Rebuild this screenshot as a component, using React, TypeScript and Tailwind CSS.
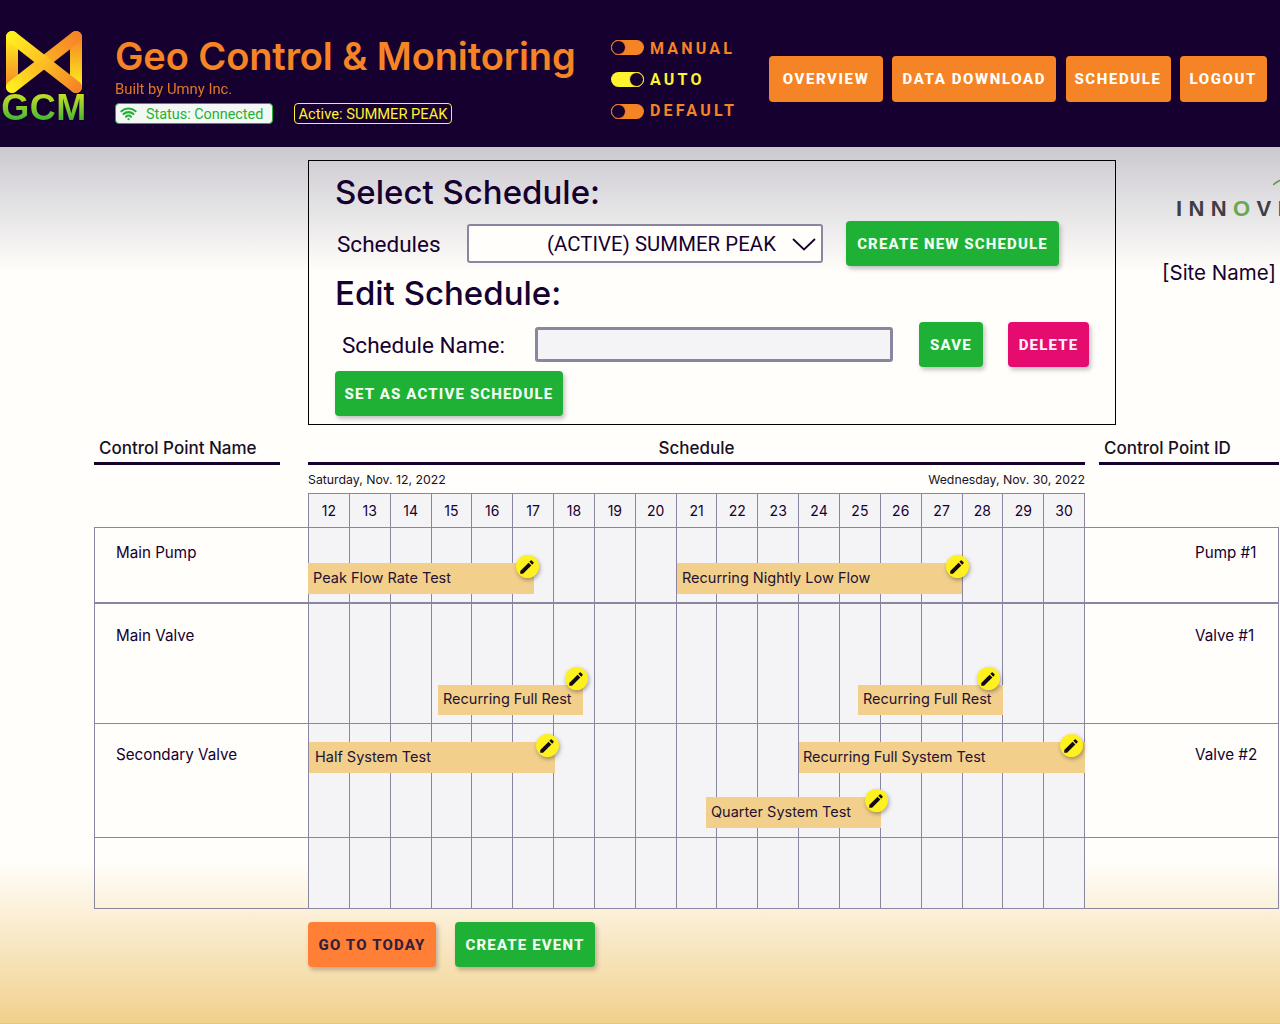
import React from "react";
import { Wifi } from "lucide-react";
import { MdEdit } from "react-icons/md";

const days = [12,13,14,15,16,17,18,19,20,21,22,23,24,25,26,27,28,29,30];

type Ev = { label: string; left: number; top: number; width: number; height: number; pencilX: number; pencilY: number; textX: number };

const rows: { name: string; id: string; height: number; pad: number; border: string; events: Ev[] }[] = [
  { name: "Main Pump", id: "Pump #1", height: 76, pad: 15, border: "border-b-2", events: [
    { label: "Peak Flow Rate Test", left: 0, top: 35, width: 226, height: 31, pencilX: 219, pencilY: 40, textX: 5 },
    { label: "Recurring Nightly Low Flow", left: 369, top: 35, width: 285, height: 31, pencilX: 649, pencilY: 40, textX: 5 },
  ]},
  { name: "Main Valve", id: "Valve #1", height: 120, pad: 22, border: "border-b", events: [
    { label: "Recurring Full Rest", left: 130, top: 81, width: 145, height: 30, pencilX: 268, pencilY: 76, textX: 5 },
    { label: "Recurring Full Rest", left: 550, top: 81, width: 145, height: 30, pencilX: 680, pencilY: 76, textX: 5 },
  ]},
  { name: "Secondary Valve", id: "Valve #2", height: 114, pad: 21, border: "border-b", events: [
    { label: "Half System Test", left: 1, top: 18, width: 246, height: 31, pencilX: 239, pencilY: 23, textX: 6 },
    { label: "Recurring Full System Test", left: 491, top: 18, width: 286, height: 31, pencilX: 763, pencilY: 23, textX: 4 },
    { label: "Quarter System Test", left: 398, top: 73, width: 175, height: 31, pencilX: 568, pencilY: 78, textX: 5 },
  ]},
  { name: "", id: "", height: 71, pad: 0, border: "border-b", events: [] },
];

function Toggle({ on, label, textCls }: { on?: boolean; label: string; textCls: string }) {
  const color = on ? "text-[#fff22e]" : "text-[#f58426]";
  return (
    <div className="flex items-center h-[15px] gap-[6px]">
      <div className={`w-[33px] h-[15px] rounded-full flex ${on ? "bg-[#fff22e] justify-end" : "bg-[#f58426] justify-start"}`}>
        <div className={`w-[15px] h-[15px] rounded-full bg-[#160030] border ${on ? "border-[#fff22e]" : "border-[#f58426]"}`} />
      </div>
      <span className={`font-['Roboto'] font-bold text-[16px] tracking-[3.2px] leading-none ${textCls} ${color}`}>{label}</span>
    </div>
  );
}

function NavBtn({ children, w }: { children: React.ReactNode; w: string }) {
  return (
    <button className={`${w} h-[46px] pt-[1px] bg-[#f58426] rounded-[4px] text-white font-['Roboto'] font-extrabold text-[15px] tracking-[1.6px] flex items-center justify-center`}>
      {children}
    </button>
  );
}

function Btn({ children, cls }: { children: React.ReactNode; cls: string }) {
  return (
    <button className={`${cls} h-[45px] pt-[1px] rounded-[4px] font-['Roboto'] font-extrabold text-[15px] tracking-[1.15px] flex items-center justify-center shadow-[2px_3px_4px_rgba(60,50,60,0.3)]`}>
      {children}
    </button>
  );
}

function Logo() {
  return (
    <div className="w-[86px] flex flex-col items-center shrink-0">
      <svg width="80" height="64" viewBox="0 0 80 64" className="block">
        <defs>
          <linearGradient id="a" gradientUnits="userSpaceOnUse" x1="6" y1="6" x2="74" y2="58">
            <stop offset="0" stopColor="#fff01f" /><stop offset="0.5" stopColor="#fbbf24" /><stop offset="1" stopColor="#f58426" />
          </linearGradient>
          <linearGradient id="b" gradientUnits="userSpaceOnUse" x1="6" y1="58" x2="74" y2="6">
            <stop offset="0" stopColor="#fff01f" /><stop offset="0.5" stopColor="#fbb024" /><stop offset="1" stopColor="#f58426" />
          </linearGradient>
          <linearGradient id="c" gradientUnits="userSpaceOnUse" x1="6" y1="6" x2="6" y2="58">
            <stop offset="0" stopColor="#fff01f" /><stop offset="1" stopColor="#f58426" />
          </linearGradient>
          <linearGradient id="d" gradientUnits="userSpaceOnUse" x1="74" y1="6" x2="74" y2="58">
            <stop offset="0" stopColor="#f58426" /><stop offset="1" stopColor="#fff01f" />
          </linearGradient>
        </defs>
        <path d="M8 7V57" stroke="url(#c)" strokeWidth="12" strokeLinecap="round" fill="none" />
        <path d="M72 7V57" stroke="url(#d)" strokeWidth="12" strokeLinecap="round" fill="none" />
        <path d="M8 57L72 7" stroke="url(#b)" strokeWidth="12" strokeLinecap="round" fill="none" />
        <path d="M8 7L72 57" stroke="url(#a)" strokeWidth="12" strokeLinecap="round" fill="none" />
      </svg>
      <div className="font-['Liberation_Sans'] font-bold text-[36px] leading-[30px] -mt-[1px] tracking-[0.5px] bg-gradient-to-b from-[#c6e21f] to-[#22b233] bg-clip-text text-transparent">GCM</div>
    </div>
  );
}

function Header() {
  return (
    <header className="h-[147px] bg-[#160030] flex items-start shrink-0">
      <div className="pl-[1px] pt-[30px] w-[115px] shrink-0"><Logo /></div>
      <div className="w-[496px] shrink-0 pt-[33px] flex flex-col">
        <div className="font-['Inter'] font-semibold text-[38px] leading-[46px] text-[#f58426] tracking-[-0.1px] whitespace-nowrap">Geo Control &amp; Monitoring</div>
        <div className="font-['Roboto'] text-[14.8px] leading-[18px] mt-[1px] text-[#f58426] opacity-90">Built by Umny Inc.</div>
        <div className="flex items-center mt-[5px]">
          <div className="w-[158px] h-[21px] rounded-[4px] bg-[#f4f8f4] border border-[#1fb136] flex items-center pl-[4px] text-[#1fb136]">
            <Wifi size={17} strokeWidth={3} />
            <span className="font-['Roboto'] text-[14.4px] leading-none ml-[9px] mt-[3px]">Status: Connected</span>
          </div>
          <div className="ml-[21px] w-[158px] h-[21px] pt-[1px] rounded-[4px] border border-[#fff22e] text-[#fff22e] flex items-center justify-center font-['Roboto'] text-[14.7px] leading-none whitespace-nowrap">Active: SUMMER PEAK</div>
        </div>
      </div>
      <div className="w-[158px] shrink-0 pt-[40px] flex flex-col gap-[17px]">
        <Toggle label="MANUAL" textCls="mt-[3px]" />
        <Toggle on label="AUTO" textCls="mt-[1px]" />
        <Toggle label="DEFAULT" textCls="-mt-[1px]" />
      </div>
      <div className="pt-[56px] flex gap-[9.25px]">
        <NavBtn w="w-[114px]">OVERVIEW</NavBtn>
        <NavBtn w="w-[164px]">DATA DOWNLOAD</NavBtn>
        <NavBtn w="w-[105px]">SCHEDULE</NavBtn>
        <NavBtn w="w-[87px]">LOGOUT</NavBtn>
      </div>
    </header>
  );
}

function SchedulePanel() {
  return (
    <section className="w-[808px] h-[265px] border border-black pl-[26px] shrink-0 flex flex-col text-[#160030]">
      <h2 className="font-['Inter'] font-medium text-[33px] leading-[40px] mt-[11px]">Select Schedule:</h2>
      <div className="flex items-center mt-[9px] h-[45px]">
        <span className="font-['Roboto'] text-[22.5px] mt-[2px] w-[132px] pl-[2px]">Schedules</span>
        <div className="w-[356px] h-[39px] pt-[1px] bg-[#fffefa] border-2 border-[#8a86a0] rounded-[3px] flex items-center justify-end pr-[5px]">
          <span className="font-['Roboto'] text-[20.3px] mr-[16px] tracking-[0.1px]">(ACTIVE) SUMMER PEAK</span>
          <svg width="24" height="14" viewBox="0 0 24 14" fill="none" stroke="#160030" strokeWidth="1.8"><path d="M1 2L12 12.5L23 2" /></svg>
        </div>
        <Btn cls="ml-[23px] w-[213px] bg-[#1fb136] text-[#f2fff2]">CREATE NEW SCHEDULE</Btn>
      </div>
      <h2 className="font-['Inter'] font-medium text-[33px] leading-[40px] mt-[7px]">Edit Schedule:</h2>
      <div className="flex items-center mt-[9px] h-[45px]">
        <span className="font-['Roboto'] text-[22.5px] mt-[2px] w-[200px] pl-[7px]">Schedule Name:</span>
        <div className="w-[358px] h-[35px] bg-[#f4f4f7] border-[3px] border-[#8a86a0] rounded-[3px]" />
        <Btn cls="ml-[26px] w-[64px] bg-[#1fb136] text-[#f2fff2]">SAVE</Btn>
        <Btn cls="ml-[25px] w-[81px] bg-[#e60b6f] text-[#fff2f8]">DELETE</Btn>
      </div>
      <Btn cls="mt-[4px] w-[228px] bg-[#1fb136] text-[#f2fff2]">SET AS ACTIVE SCHEDULE</Btn>
    </section>
  );
}

function Brand() {
  return (
    <div className="ml-[46px] w-[118px] overflow-hidden shrink-0">
      <div className="relative h-[61px] pl-[14px] pt-[36px]">
        <svg width="8" height="7" viewBox="0 0 8 7" className="absolute left-[111px] top-[19px]"><path d="M0 6C2 4 4 2.5 8 1" stroke="#5a9a3c" strokeWidth="1.5" fill="none" /></svg>
        <div className="font-['Liberation_Sans'] font-bold text-[22px] leading-[26px] tracking-[6.4px] text-[#3f3d45] whitespace-nowrap">INN<span className="text-[#6aa84f]">O</span>VI</div>
      </div>
      <div className="font-['Inter'] text-[20.5px] leading-[28px] text-[#160030] mt-[38px] whitespace-nowrap">[Site Name]</div>
    </div>
  );
}

function EventBar({ e }: { e: Ev }) {
  return (
    <>
      <div
        className="absolute bg-[#f2d08c] flex items-center pb-[2px] font-['Inter'] text-[14.5px] text-[#241233] whitespace-nowrap"
        style={{ left: e.left, top: e.top, width: e.width, height: e.height, paddingLeft: e.textX }}
      >
        {e.label}
      </div>
      <div
        className="absolute w-[23px] h-[23px] rounded-full bg-[#fff01f] flex items-center justify-center shadow-[1px_2px_4px_rgba(40,30,40,0.4)]"
        style={{ left: e.pencilX - 11.5, top: e.pencilY - 13 }}
      >
        <MdEdit size={18} color="#120a14" />
      </div>
    </>
  );
}

function Schedule() {
  const head = "border-b-[3px] border-[#160030] font-['Inter'] font-medium text-[17px] leading-[22px] text-[#1a1024]";
  return (
    <section className="w-[1186px] ml-[94px] mt-[12px] shrink-0 text-[#160030]">
      <div className="flex h-[28px]">
        <div className={`w-[186px] pl-[5px] ${head}`}>Control Point Name</div>
        <div className={`ml-[28px] w-[777px] text-center ${head}`}>Schedule</div>
        <div className={`ml-[14px] mr-[1px] flex-1 pl-[5px] ${head}`}>Control Point ID</div>
      </div>
      <div className="ml-[214px] w-[777px] flex justify-between items-center h-[28px] pt-[3px] font-['Inter'] text-[12.3px] text-[#1a1024]">
        <span>Saturday, Nov. 12, 2022</span>
        <span>Wednesday, Nov. 30, 2022</span>
      </div>
      <div className="ml-[214px] w-[777px] h-[34px] flex border-r border-[#8a86a0]">
        {days.map((d) => (
          <div key={d} className="flex-1 bg-[#f4f4f7] border-l border-t border-[#8a86a0] flex items-center justify-center font-['Inter'] text-[14px]">{d}</div>
        ))}
      </div>
      <div className="border-t border-l border-r border-[#8a86a0] mr-[1px]">
        {rows.map((r, i) => (
          <div key={i} className={`flex ${r.border} border-[#8a86a0]`} style={{ height: r.height }}>
            <div className="w-[213px] shrink-0 pl-[21px] font-['Inter'] text-[15.2px] leading-[20px]" style={{ paddingTop: r.pad }}>{r.name}</div>
            <div className="relative w-[777px] shrink-0 flex border-r border-[#8a86a0]">
              {days.map((d) => (
                <div key={d} className="flex-1 bg-[#f4f4f7] border-l border-[#8a86a0]" />
              ))}
              {r.events.map((e) => <EventBar key={e.label + e.left} e={e} />)}
            </div>
            <div className="flex-1 pl-[110px] font-['Inter'] text-[15.2px] leading-[20px]" style={{ paddingTop: r.pad }}>{r.id}</div>
          </div>
        ))}
      </div>
      <div className="ml-[214px] mt-[13px] flex gap-[19px]">
        <Btn cls="w-[128px] bg-[#ff7f37] text-[#33203a]">GO TO TODAY</Btn>
        <Btn cls="w-[140px] bg-[#1fb136] text-[#f2fff2]">CREATE EVENT</Btn>
      </div>
    </section>
  );
}

export default function App() {
  return (
    <div className="w-[1280px] h-[1024px] overflow-hidden flex flex-col bg-[#fffefa] font-['Inter']">
      <Header />
      <main className="flex-1 flex flex-col bg-[linear-gradient(to_bottom,#cbc9d0_0px,#fffefa_125px,#fffefa_715px,#f2d08c_877px)] border-b border-[#e0c89a]">
        <div className="flex pl-[308px] pt-[13px] shrink-0">
          <SchedulePanel />
          <Brand />
        </div>
        <Schedule />
      </main>
    </div>
  );
}
